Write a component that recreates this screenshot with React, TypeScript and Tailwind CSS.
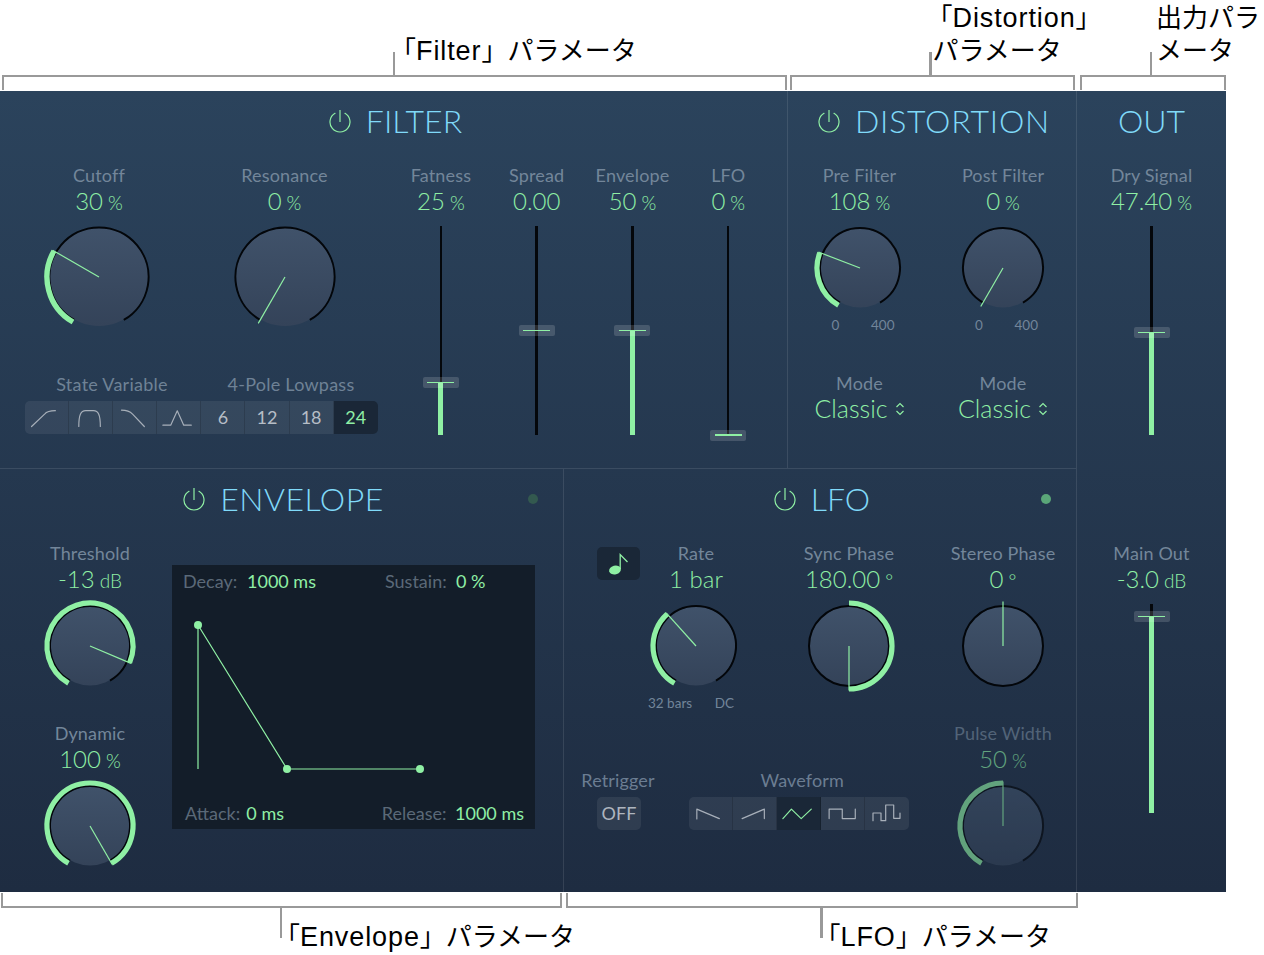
import React from "react";

const GREEN = "#8ff0a4";

function pt(cx: number, cy: number, r: number, deg: number): [number, number] {
  const a = (deg * Math.PI) / 180;
  return [cx - r * Math.sin(a), cy + r * Math.cos(a)];
}

function arc(cx: number, cy: number, r: number, from: number, to: number) {
  if (to - from >= 360) {
    return `M${cx} ${cy - r}A${r} ${r} 0 1 1 ${cx} ${cy + r}A${r} ${r} 0 1 1 ${cx} ${cy - r}`;
  }
  const [x1, y1] = pt(cx, cy, r, from);
  const [x2, y2] = pt(cx, cy, r, to);
  return `M${x1} ${y1}A${r} ${r} 0 ${to - from > 180 ? 1 : 0} 1 ${x2} ${y2}`;
}

function Knob({
  id,
  big = false,
  angle,
  from = 30,
  ringFull = false,
}: {
  id: string;
  big?: boolean;
  angle: number;
  from?: number;
  ringFull?: boolean;
}) {
  const box = big ? 110 : 100;
  const c = box / 2;
  const rDisc = big ? 49 : 39.5;
  const rRing = big ? 49.6 : 40;
  const rGreen = big ? 52 : 43;
  const wGreen = big ? 5.4 : 5.2;
  const rPtr = big ? 53.5 : 44.5;
  const [px, py] = pt(c, c, rPtr, angle);
  return (
    <svg width={box} height={box} viewBox={`0 0 ${box} ${box}`} className="block shrink-0">
      <defs>
        <linearGradient id={id} x1="0" y1="0" x2="0" y2="1">
          <stop offset="0" stopColor="#40526a" />
          <stop offset="1" stopColor="#344359" />
        </linearGradient>
      </defs>
      <circle cx={c} cy={c} r={rDisc} fill={`url(#${id})`} />
      <path
        d={ringFull ? arc(c, c, rRing, 0, 360) : arc(c, c, rRing, 30, 330)}
        fill="none"
        stroke="#03060a"
        strokeWidth={2}
      />
      {angle > from && (
        <path d={arc(c, c, rGreen, from, angle)} fill="none" stroke={GREEN} strokeWidth={wGreen} />
      )}
      <line x1={c} y1={c} x2={px} y2={py} stroke={GREEN} strokeWidth={1.2} />
    </svg>
  );
}

function Power() {
  return (
    <svg width="22" height="26" viewBox="0 0 22 26" className="block shrink-0">
      <path d="M6 5.34A10 10 0 1 0 16 5.34" fill="none" stroke={GREEN} strokeWidth="1.2" strokeLinecap="round" />
      <line x1="11" y1="2" x2="11" y2="14" stroke={GREEN} strokeWidth="1.2" />
    </svg>
  );
}

function Title({
  text,
  power = true,
  dot,
  tracking,
}: {
  text: string;
  power?: boolean;
  dot?: string;
  tracking: string;
}) {
  return (
    <div className={`relative h-[62px] pb-[2px] flex items-center justify-center gap-[15px] ${power ? "pl-[4px]" : ""}`}>
      {power && <Power />}
      <span className={`text-[32px] leading-none font-light text-[#80daf9] ${tracking}`}>{text}</span>
      {dot && <span className={`absolute right-[25px] top-[25px] w-[10px] h-[10px] rounded-full ${dot}`} />}
    </div>
  );
}

function Head({ label, value, unit }: { label: string; value: string; unit?: string }) {
  return (
    <div className="flex flex-col items-center whitespace-nowrap">
      <div className="h-[20px] leading-[18px] text-[18px] tracking-[0.15px] text-[#73869a]">{label}</div>
      <div className="mt-[2px] h-[26px] leading-[26px] text-[24px] font-light text-[#8fefa5]">
        {value}
        {unit && <span className="text-[19px] ml-[5px]">{unit}</span>}
      </div>
    </div>
  );
}

function Slider({ pos, fill = false, h = 209 }: { pos: number; fill?: boolean; h?: number }) {
  return (
    <div className="relative w-[36px]" style={{ height: h }}>
      <div className="absolute left-[16.8px] top-0 bottom-0 w-[2.4px] bg-[#04070b]" />
      {fill && (
        <div className="absolute left-[15.5px] bottom-0 w-[5px] bg-[#8ff0a4]" style={{ top: pos }} />
      )}
      <div
        className="absolute left-0 w-[36px] h-[11px] -mt-[5px] rounded-[2px] bg-white/15 flex items-center justify-center"
        style={{ top: pos }}
      >
        <div className="w-[27px] h-[1.5px] bg-[#8ff0a4]" />
      </div>
    </div>
  );
}

function SliderCol({
  label,
  value,
  unit,
  pos,
  fill,
}: {
  label: string;
  value: string;
  unit?: string;
  pos: number;
  fill?: boolean;
}) {
  return (
    <div className="w-[95.8px] flex flex-col items-center">
      <Head label={label} value={value} unit={unit} />
      <div className="mt-[12px]">
        <Slider pos={pos} fill={fill} />
      </div>
    </div>
  );
}

function Seg({ active = false, first = false, last = false, children }: { active?: boolean; first?: boolean; last?: boolean; children: React.ReactNode }) {
  return (
    <div
      className={`w-[44.1px] flex items-center justify-center ${active ? "bg-[#1a2737]" : "bg-white/[0.07]"} ${first ? "rounded-l-[5px]" : ""} ${last ? "rounded-r-[5px]" : "border-r border-black/15"}`}
    >
      {children}
    </div>
  );
}

function Wave({ d, color = "#a8b0ba" }: { d: string; color?: string }) {
  return (
    <svg width="44" height="33" viewBox="0 0 44 33" className="block">
      <path d={d} fill="none" stroke={color} strokeWidth="1.2" strokeLinejoin="round" strokeLinecap="round" />
    </svg>
  );
}

function Num({ n, active = false, last = false }: { n: string; active?: boolean; last?: boolean }) {
  return (
    <Seg active={active} last={last}>
      <span className={`text-[18px] ${active ? "text-[#8fefa5]" : "text-[#b6bdc6]"}`}>{n}</span>
    </Seg>
  );
}

function FilterSection() {
  return (
    <div className="w-[788px] border-r border-white/10">
      <Title text="FILTER" tracking="tracking-[0.1px]" />
      <div className="flex pt-[13px]">
        <div className="w-[393px] flex flex-col">
          <div className="flex">
            <div className="w-[198px] flex flex-col items-center">
              <Head label="Cutoff" value="30" unit="%" />
              <div className="mt-[8px]">
                <Knob id="k-cutoff" big angle={120} />
              </div>
            </div>
            <div className="w-[173px] flex flex-col items-center">
              <Head label="Resonance" value="0" unit="%" />
              <div className="mt-[8px]">
                <Knob id="k-res" big angle={30} />
              </div>
            </div>
          </div>
          <div className="mt-[43px] flex h-[20px] leading-[18px] text-[18px] tracking-[0.25px] text-[#6f8296]">
            <div className="w-[224px] text-center">State Variable</div>
            <div className="w-[134px] text-center whitespace-nowrap">4-Pole Lowpass</div>
          </div>
          <div className="mt-[6px] ml-[25px] flex h-[33px] w-[353px]">
            <Seg first>
              <Wave d="M6.7 25.7L20 13Q23 9.5 31 9.5" />
            </Seg>
            <Seg>
              <Wave d="M10 25.7C10 14 12 9.5 17 9.5H25C30 9.5 32 14 32 25.7" />
            </Seg>
            <Seg>
              <Wave d="M8.7 9Q16 9 20 13L32 25.7" />
            </Seg>
            <Seg>
              <Wave d="M6 24.3H14L20.7 9.7L27.3 24.3H35" />
            </Seg>
            <Num n="6" />
            <Num n="12" />
            <Num n="18" />
            <Num n="24" active last />
          </div>
        </div>
        <SliderCol label="Fatness" value="25" unit="%" pos={156} fill />
        <SliderCol label="Spread" value="0.00" pos={104} />
        <SliderCol label="Envelope" value="50" unit="%" pos={104} fill />
        <SliderCol label="LFO" value="0" unit="%" pos={208.5} />
      </div>
    </div>
  );
}

function Chevrons() {
  return (
    <svg width="10" height="16" viewBox="0 0 10 16" className="block ml-[7px]">
      <path d="M1.5 6L5 2.5L8.5 6M1.5 10L5 13.5L8.5 10" fill="none" stroke={GREEN} strokeWidth="1.2" />
    </svg>
  );
}

function DistCol({ id, label, value, angle, w }: { id: string; label: string; value: string; angle: number; w: string }) {
  return (
    <div className={`${w} flex flex-col items-center`}>
      <Head label={label} value={value} unit="%" />
      <div className="mt-[4px]">
        <Knob id={id} angle={angle} />
      </div>
      <div className="-mt-[1px] ml-[7px] w-[63px] flex justify-between text-[13.5px] leading-[16px] text-[#72859a]">
        <span>0</span>
        <span>400</span>
      </div>
      <div className="mt-[41px] h-[20px] leading-[18px] text-[18px] tracking-[0.15px] text-[#73869a]">Mode</div>
      <div className="mt-[2px] h-[26px] flex items-center text-[25px] font-light text-[#8fefa5]">
        Classic
        <Chevrons />
      </div>
    </div>
  );
}

function DistortionSection() {
  return (
    <div className="w-[289px] border-r border-white/10">
      <Title text="DISTORTION" tracking="tracking-[0.8px]" />
      <div className="flex pt-[13px]">
        <DistCol id="k-pre" w="w-[143px]" label="Pre Filter" value="108" angle={111} />
        <DistCol id="k-post" w="w-[144px]" label="Post Filter" value="0" angle={30} />
      </div>
    </div>
  );
}

function KnobCol({ id, label, value, unit, angle, from, ringFull }: { id: string; label: string; value: string; unit?: string; angle: number; from?: number; ringFull?: boolean }) {
  return (
    <div className="flex flex-col items-center">
      <Head label={label} value={value} unit={unit} />
      <div className="mt-[4px]">
        <Knob id={id} angle={angle} from={from} ringFull={ringFull} />
      </div>
    </div>
  );
}

function EnvelopeDisplay() {
  const K = "text-[18px] text-[#5b6978]";
  const V = "text-[18px] text-[#8fefa5]";
  return (
    <div className="relative w-[363px] h-[264px] mt-[21px] bg-[#131d29] flex flex-col justify-between px-[11px] py-[4px] leading-[24px] whitespace-nowrap">
      <svg width="363" height="264" viewBox="0 0 363 264" className="absolute left-0 top-0">
        <path d="M26 60V204M26 60L115 204H248" fill="none" stroke={GREEN} strokeWidth="1.2" />
        <circle cx="26" cy="60" r="4" fill={GREEN} />
        <circle cx="115" cy="204" r="4" fill={GREEN} />
        <circle cx="248" cy="204" r="4" fill={GREEN} />
      </svg>
      <div className="relative flex">
        <span className={`${K} w-[64px]`}>Decay:</span>
        <span className={`${V} w-[138px]`}>1000 ms</span>
        <span className={`${K} w-[71px]`}>Sustain:</span>
        <span className={V}>0 %</span>
      </div>
      <div className="relative flex pl-[2px]">
        <span className={`${K} w-[62px]`}>Attack:</span>
        <span className={`${V} w-[137px]`}>0 ms</span>
        <span className={`${K} w-[74px]`}>Release:</span>
        <span className={V}>1000 ms</span>
      </div>
    </div>
  );
}

function EnvelopeSection() {
  return (
    <div className="w-[564px] border-r border-white/10">
      <Title text="ENVELOPE" dot="bg-[#33594f]" tracking="tracking-[0.5px]" />
      <div className="flex pt-[13px]">
        <div className="w-[172px] pl-[8px] flex flex-col gap-[28px]">
          <KnobCol id="k-thr" label="Threshold" value="-13" unit="dB" angle={293} />
          <KnobCol id="k-dyn" label="Dynamic" value="100" unit="%" angle={330} />
        </div>
        <EnvelopeDisplay />
      </div>
    </div>
  );
}

function LfoSection() {
  return (
    <div className="w-[513px] border-r border-white/10">
      <Title text="LFO" dot="bg-[#5aa678]" tracking="tracking-[0px]" />
      <div className="flex pt-[13px]">
        <div className="w-[366px] flex flex-col">
          <div className="h-[227px] flex">
            <div className="w-[76px] pl-[33px] pt-[3px]">
              <div className="w-[43px] h-[33px] rounded-[5px] bg-[#1a2737] flex items-center justify-center">
                <svg width="24" height="28" viewBox="0 0 24 28" className="block">
                  <ellipse cx="8" cy="20" rx="6" ry="4.4" fill={GREEN} transform="rotate(-15 8 20)" />
                  <path d="M13.2 19V4.5L20.5 12" fill="none" stroke={GREEN} strokeWidth="1.3" />
                </svg>
              </div>
            </div>
            <div className="w-[112px] flex flex-col items-center">
              <Head label="Rate" value="1 bar" />
              <div className="mt-[4px]">
                <Knob id="k-rate" angle={138} />
              </div>
              <div className="-mt-[1px] -ml-[10px] w-[86px] flex justify-between text-[13.5px] leading-[16px] text-[#72859a] whitespace-nowrap">
                <span>32 bars</span>
                <span>DC</span>
              </div>
            </div>
            <div className="w-[146px] ml-[24px]">
              <KnobCol id="k-sync" label="Sync Phase" value="180.00" unit="°" angle={360} from={180} ringFull />
            </div>
          </div>
          <div className="flex">
            <div className="w-[108px] flex flex-col items-center">
              <div className="h-[20px] leading-[18px] text-[18px] tracking-[0.15px] text-[#6b7d92]">Retrigger</div>
              <div className="mt-[6px] ml-[2px] w-[44px] h-[33px] rounded-[5px] bg-white/[0.07] flex items-center justify-center text-[18px] text-[#aeb5bf]">
                OFF
              </div>
            </div>
            <div className="ml-[17px] flex flex-col">
              <div className="h-[20px] leading-[18px] text-[18px] tracking-[0.15px] text-[#6b7d92] text-center pl-[6px]">Waveform</div>
              <div className="mt-[6px] flex h-[33px]">
                <Seg first>
                  <Wave d="M8 22V12L31 21.7" />
                </Seg>
                <Seg>
                  <Wave d="M9.3 21.7L32 12V21.7" />
                </Seg>
                <Seg active>
                  <Wave d="M6 21.7L14.7 12L24.7 21.7L35 12" color={GREEN} />
                </Seg>
                <Seg>
                  <Wave d="M8.3 21.7V12H21.7V21.7H35V12" />
                </Seg>
                <Seg last>
                  <Wave d="M8 23.7V16H16V23.7H20.7V8H28.7V21.3H35V16" />
                </Seg>
              </div>
            </div>
          </div>
        </div>
        <div className="w-[146px] flex flex-col gap-[28px]">
          <KnobCol id="k-stereo" label="Stereo Phase" value="0" unit="°" angle={180} from={180} ringFull />
          <div className="opacity-60">
            <KnobCol id="k-pw" label="Pulse Width" value="50" unit="%" angle={180} />
          </div>
        </div>
      </div>
    </div>
  );
}

function OutSection() {
  return (
    <div className="flex-1 flex flex-col">
      <Title text="OUT" power={false} tracking="tracking-[0px]" />
      <div className="pt-[13px] h-[316px] shrink-0 flex flex-col items-center">
        <Head label="Dry Signal" value="47.40" unit="%" />
        <div className="mt-[12px]">
          <Slider pos={106} fill />
        </div>
      </div>
      <div className="pt-[75px] flex flex-col items-center">
        <Head label="Main Out" value="-3.0" unit="dB" />
        <div className="mt-[12px]">
          <Slider pos={12} fill />
        </div>
      </div>
    </div>
  );
}

function Latin({ children }: { children: React.ReactNode }) {
  return <span className="text-[27px] tracking-[0.9px]">{children}</span>;
}

function TopCallout({ w, ml, stem, children }: { w: string; ml: string; stem: string; children: React.ReactNode }) {
  return (
    <div className={`${w} ${ml} h-[90px] flex flex-col justify-end shrink-0`}>
      <div className="flex items-end">
        <div className={`${stem} shrink-0`} />
        <div className="w-[2.5px] h-[24px] -mb-[1px] bg-[#999] shrink-0" />
        <div className="ml-[1px] mb-[7px] whitespace-nowrap leading-[33px] text-[26px] text-black">{children}</div>
      </div>
      <div className="h-[15px] border-t-[2.5px] border-x-[2.5px] border-[#999]" />
    </div>
  );
}

function BottomCallout({ w, ml, stem, children }: { w: string; ml: string; stem: string; children: React.ReactNode }) {
  return (
    <div className={`${w} ${ml} shrink-0 flex flex-col`}>
      <div className="mt-[1px] h-[15px] border-b-[2.5px] border-x-[2.5px] border-[#999]" />
      <div className="flex items-start">
        <div className={`${stem} shrink-0`} />
        <div className="w-[2.5px] h-[30px] bg-[#999] shrink-0" />
        <div className="-ml-[8px] mt-[13px] whitespace-nowrap leading-[33px] text-[26px] text-black">{children}</div>
      </div>
    </div>
  );
}

export default function App() {
  return (
    <div className="w-[1264px] h-[955px] overflow-hidden bg-white font-['Lato','Noto_Sans',sans-serif]">
      <div className="h-[91px] flex font-['Liberation_Sans','Noto_Sans_CJK_JP',sans-serif]">
        <TopCallout w="w-[785px]" ml="ml-[1.5px]" stem="w-[391px]">
          <span className="-ml-[6px]">「</span><Latin>Filter</Latin>」パラメータ
        </TopCallout>
        <TopCallout w="w-[285px]" ml="ml-[3.5px]" stem="w-[139px]">
          <span className="-ml-[6px]">「</span><Latin>Distortion</Latin>」
          <br />
          パラメータ
        </TopCallout>
        <TopCallout w="w-[146px]" ml="ml-[4.5px]" stem="w-[70px]">
          <span className="ml-[3px]">出力パラ</span>
          <br />
          <span className="ml-[3px]">メータ</span>
        </TopCallout>
      </div>
      <div className="w-[1226px] h-[801px] flex bg-linear-to-b from-[#2b435c] to-[#1e2c41]">
        <div className="w-[1077px] flex flex-col">
          <div className="h-[378px] shrink-0 flex border-b border-white/10">
            <FilterSection />
            <DistortionSection />
          </div>
          <div className="h-[423px] shrink-0 flex">
            <EnvelopeSection />
            <LfoSection />
          </div>
        </div>
        <OutSection />
      </div>
      <div className="flex font-['Liberation_Sans','Noto_Sans_CJK_JP',sans-serif]">
        <BottomCallout w="w-[561px]" ml="ml-[1px]" stem="w-[278.5px]">
          「<Latin>Envelope</Latin>」パラメータ
        </BottomCallout>
        <BottomCallout w="w-[512px]" ml="ml-[4px]" stem="w-[254px]">
          「<Latin>LFO</Latin>」パラメータ
        </BottomCallout>
      </div>
    </div>
  );
}
